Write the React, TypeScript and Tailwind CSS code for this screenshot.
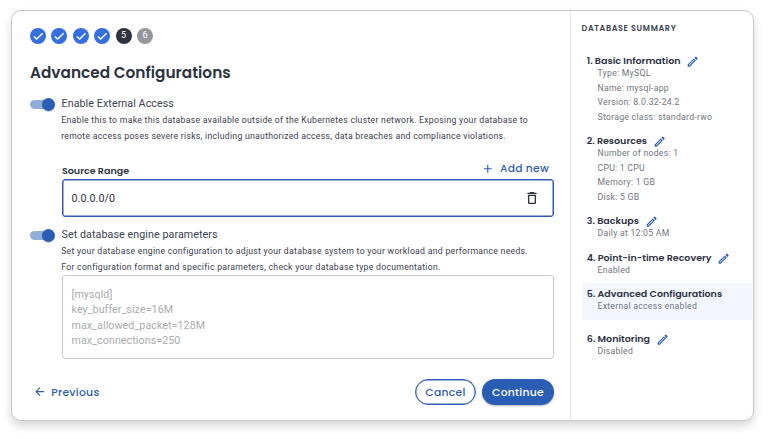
import type { ReactNode } from "react";
import {
  MdAdd,
  MdArrowBack,
  MdOutlineDelete,
  MdOutlineEdit,
} from "react-icons/md";

const heading = "font-[Poppins,Inter,sans-serif]";

function Steps() {
  return (
    <div className="flex h-4 gap-[5.4px]">
      {[1, 2, 3, 4].map((n) => (
        <span
          key={n}
          className="flex size-4 items-center justify-center rounded-full bg-[#3570de] text-white"
        >
          <svg viewBox="0 0 24 24" className="size-[12.5px]" fill="none">
            <path
              d="M3.6 12.4 9 17.4 20.4 6.4"
              stroke="currentColor"
              strokeWidth="2.7"
            />
          </svg>
        </span>
      ))}
      <span className="flex size-4 items-center justify-center rounded-full bg-[#2c323e] text-[9px] text-white">
        5
      </span>
      <span className="flex size-4 items-center justify-center rounded-full bg-[#96979b] text-[9px] text-white">
        6
      </span>
    </div>
  );
}

function Toggle() {
  return (
    <span className="flex h-[13px] w-[25px] shrink-0 items-center">
      <span className="h-[9px] w-[22px] rounded-full bg-[#91add9]" />
      <span className="-ml-[10px] size-[13px] shrink-0 rounded-full bg-[#2a5db4] shadow-[0_1px_1px_rgba(0,0,0,0.2)]" />
    </span>
  );
}

function ToggleRow({ label }: { label: string }) {
  return (
    <div className="flex h-4 items-center gap-[6.5px]">
      <Toggle />
      <span className="text-[10.7px] leading-4 tracking-[0.08px] text-[#3a4151]">
        {label}
      </span>
    </div>
  );
}

function Help({ children }: { children: ReactNode }) {
  return (
    <div className="ml-[31.2px] text-[8.7px] leading-4 tracking-[0.275px] whitespace-nowrap text-[#3a404c]">
      {children}
    </div>
  );
}

type SummaryItem = {
  title: string;
  lines: string[];
  editable: boolean;
  box: string;
};

const summary: SummaryItem[] = [
  {
    title: "1. Basic Information",
    lines: [
      "Type: MySQL",
      "Name: mysql-app",
      "Version: 8.0.32-24.2",
      "Storage class: standard-rwo",
    ],
    editable: true,
    box: "mt-[20px]",
  },
  {
    title: "2. Resources",
    lines: ["Number of nodes: 1", "CPU: 1 CPU", "Memory: 1 GB", "Disk: 5 GB"],
    editable: true,
    box: "mt-[11px]",
  },
  {
    title: "3. Backups",
    lines: ["Daily at 12:05 AM"],
    editable: true,
    box: "mt-[11px]",
  },
  {
    title: "4. Point-in-time Recovery",
    lines: ["Enabled"],
    editable: true,
    box: "mt-[11px]",
  },
  {
    title: "5. Advanced Configurations",
    lines: ["External access enabled"],
    editable: false,
    box: "mt-[5.8px] pt-[5px] pb-[7px] mr-px bg-[#f4f8fe]",
  },
  {
    title: "6. Monitoring",
    lines: ["Disabled"],
    editable: true,
    box: "mt-[12.3px]",
  },
];

function SummaryBlock({ item }: { item: SummaryItem }) {
  return (
    <section className={`ml-[11px] pl-[4.7px] ${item.box}`}>
      <h3
        className={`flex h-3 items-center gap-[5.8px] text-[9.52px] leading-3 font-semibold whitespace-nowrap text-[#2c323e] ${heading}`}
      >
        {item.title}
        {item.editable && (
          <MdOutlineEdit className="mt-[2px] size-[13.3px] text-[#2d5cb0]" />
        )}
      </h3>
      <div className="-mt-px ml-[10.8px] text-[8.7px] leading-[14.5px] tracking-[0.26px] whitespace-nowrap text-[#71757e]">
        {item.lines.map((line) => (
          <p key={line}>{line}</p>
        ))}
      </div>
    </section>
  );
}

export default function App() {
  return (
    <div className="h-[439px] w-[768px] overflow-hidden bg-white pt-[10px] pl-[11px] font-[Roboto,sans-serif]">
      <div className="flex h-[411px] w-[743px] overflow-hidden rounded-[10px] border border-[#c8c8c8] bg-white shadow-[0_5px_10px_rgba(0,0,0,0.16)]">
        <main className="flex w-[558px] shrink-0 flex-col pt-[17px] pl-[18px]">
          <Steps />
          <h1
            className={`mt-[17px] text-[15.33px] leading-6 font-semibold text-[#2c323e] ${heading}`}
          >
            Advanced Configurations
          </h1>
          <div className="mt-[11px]">
            <ToggleRow label="Enable External Access" />
          </div>
          <Help>
            <p>
              Enable this to make this database available outside of the
              Kubernetes cluster network. Exposing your database to
            </p>
            <p>
              remote access poses severe risks, including unauthorized access,
              data breaches and compliance violations.
            </p>
          </Help>
          <div
            className={`mt-[17px] ml-[32px] flex h-[18px] w-[492px] justify-between ${heading}`}
          >
            <span className="pt-[4px] text-[9.52px] leading-3 font-semibold text-[#2c323e]">
              Source Range
            </span>
            <button className="flex h-[15px] items-center gap-[5.5px] pr-[5px] text-[10.7px] leading-[15px] font-medium tracking-[0.27px] text-[#2d5cb0]">
              <MdAdd className="size-[13.5px]" />
              Add new
            </button>
          </div>
          <div className="ml-[32px] flex h-[38px] w-[492px] items-center justify-between rounded-[3px] border border-[#2d5cb0] pr-[13.5px] pl-[8.5px] shadow-[inset_0_0_0_0.5px_#2d5cb0]">
            <span className="pt-[2px] text-[10.7px] tracking-[0.07px] text-[#2c323e]">
              0.0.0.0/0
            </span>
            <MdOutlineDelete className="size-4 text-[#2c323e]" />
          </div>
          <div className="mt-[10px]">
            <ToggleRow label="Set database engine parameters" />
          </div>
          <Help>
            <p>
              Set your database engine configuration to adjust your database
              system to your workload and performance needs.
            </p>
            <p>
              For configuration format and specific parameters, check your
              database type documentation.
            </p>
          </Help>
          <pre className="ml-[32px] h-[84px] w-[492px] rounded-[3px] border border-[#c6c7c9] pt-[11px] pl-[8.5px] font-[Roboto,sans-serif] text-[10.7px] leading-[15.3px] tracking-[0.07px] text-[#a9abaf]">
            {"[mysqld]\nkey_buffer_size=16M\nmax_allowed_packet=128M\nmax_connections=250"}
          </pre>
          <div
            className={`mt-[20px] flex h-[26px] w-[524px] items-center text-[10.8px] font-medium tracking-[0.27px] text-[#2d5cb0] ${heading}`}
          >
            <button className="flex items-center gap-[5px] pl-[3px] leading-4">
              <MdArrowBack className="size-[13.3px]" />
              <span className="pt-[1.5px]">Previous</span>
            </button>
            <button className="ml-auto flex h-[26px] w-[61px] items-center justify-center rounded-full border border-[#2d5cb0] pt-[2px] leading-4 shadow-[inset_0_0_0_0.4px_#2d5cb0]">
              Cancel
            </button>
            <button className="ml-[6px] flex h-[26px] w-[72px] items-center justify-center rounded-full bg-[#2a5db4] pt-[2px] leading-4 text-white shadow-[0_1px_2px_rgba(0,0,0,0.3)]">
              Continue
            </button>
          </div>
        </main>
        <aside className="flex-1 border-l border-[#e6e7e8] pt-[12px]">
          <h2
            className={`ml-[10.5px] text-[8px] leading-3 font-semibold tracking-[0.65px] text-[#3a3f4a] ${heading}`}
          >
            DATABASE SUMMARY
          </h2>
          {summary.map((item) => (
            <SummaryBlock key={item.title} item={item} />
          ))}
        </aside>
      </div>
    </div>
  );
}
